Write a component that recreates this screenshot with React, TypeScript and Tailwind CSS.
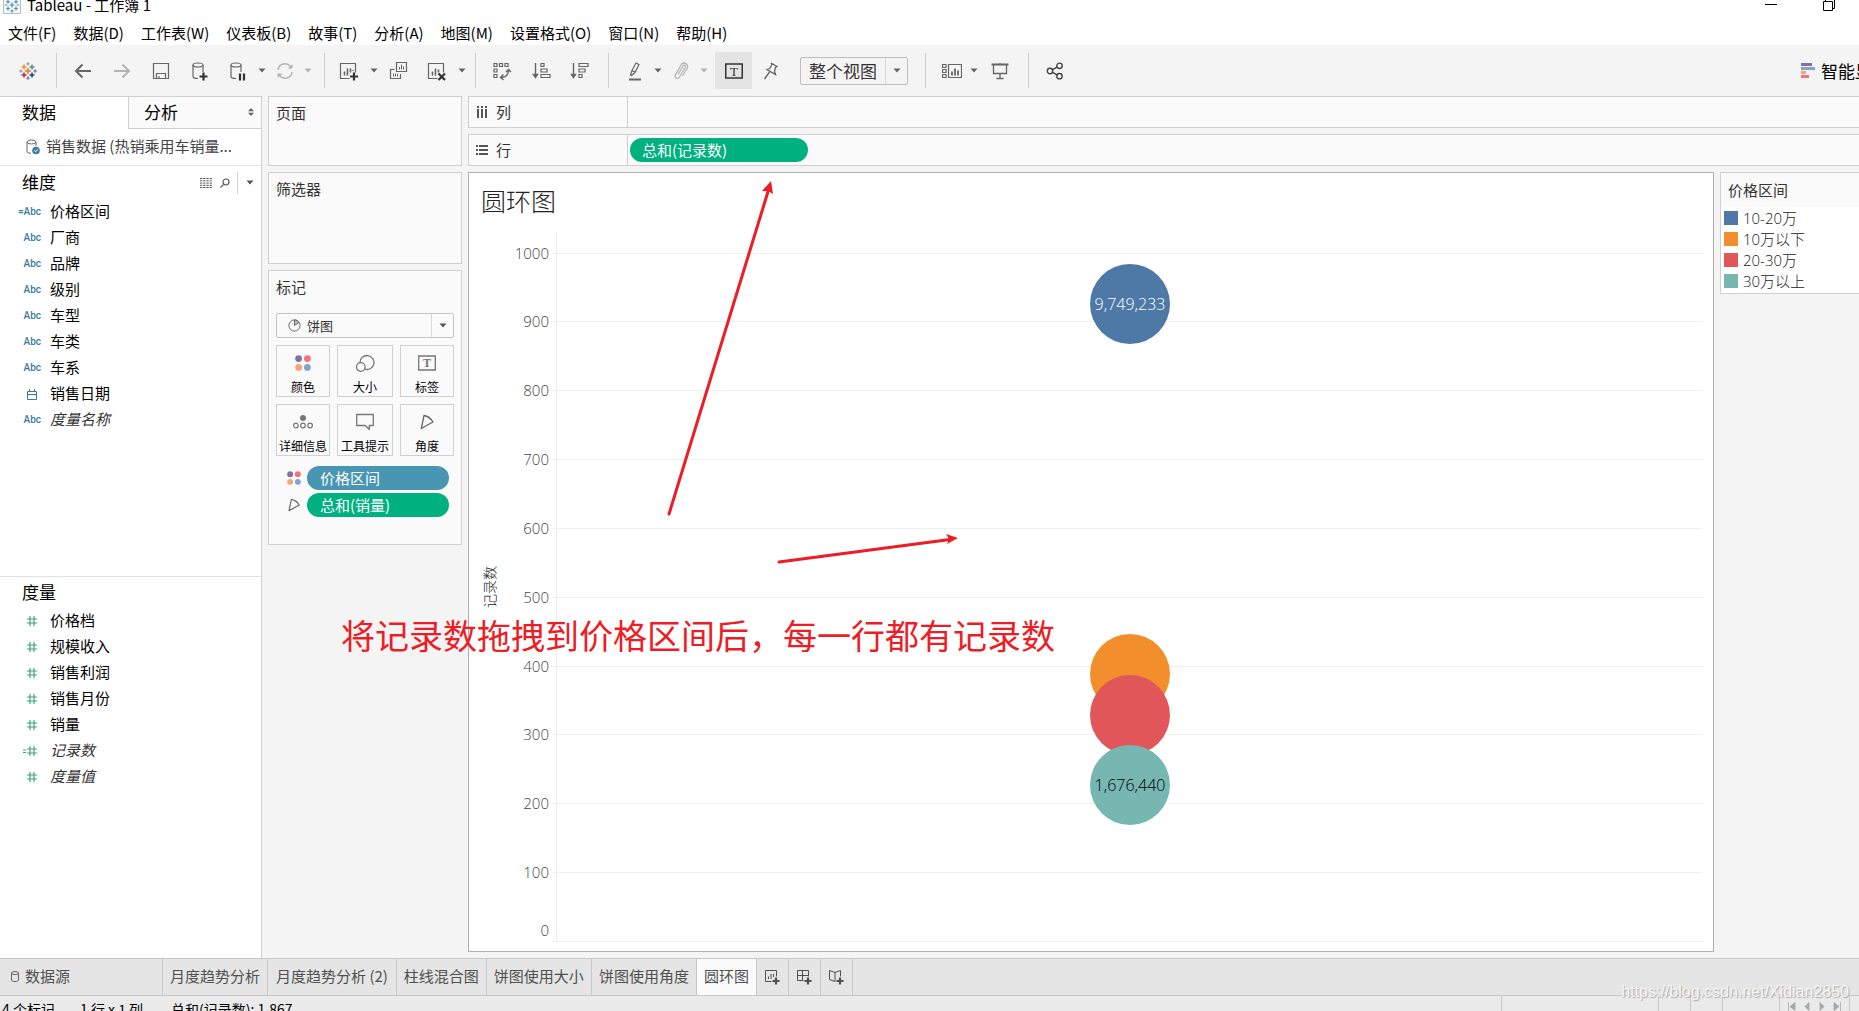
import React from "react";
import clsx from "clsx";

type IconProps = { children: React.ReactNode; size?: number; className?: string };

const Icon = ({ children, size = 20, className }: IconProps) => (
  <svg
    width={size}
    height={size}
    viewBox={`0 0 ${size} ${size}`}
    fill="none"
    stroke="currentColor"
    className={clsx("shrink-0", className)}
    aria-hidden="true"
  >
    {children}
  </svg>
);

const Caret = ({ className }: { className?: string }) => (
  <svg width="8" height="5" viewBox="0 0 8 5" className={clsx("shrink-0", className)} aria-hidden="true">
    <path d="M0.5 0.5h7L4 4.5z" fill="currentColor" />
  </svg>
);

const TableauLogo = () => (
  <Icon>
    <g strokeWidth="1.5">
      <path d="M10 7v6M7 10h6" stroke="#e8762c" />
      <path d="M6 3.5v5M3.5 6h5" stroke="#eb912c" />
      <path d="M14 3.5v5M11.5 6h5" stroke="#59879b" />
      <path d="M6 11.5v5M3.5 14h5" stroke="#c72035" />
      <path d="M14 11.5v5M11.5 14h5" stroke="#1f457e" />
    </g>
    <path d="M10 1.2v3.4M8.3 2.9h3.4" stroke="#7199a6" />
    <path d="M10 15.4v3.4M8.3 17.1h3.4" stroke="#5c6692" />
    <path d="M2.9 8.3v3.4M1.2 10h3.4" stroke="#7b94c4" />
    <path d="M17.1 8.3v3.4M15.4 10h3.4" stroke="#5c6692" />
  </Icon>
);

const TitleLogo = () => (
  <svg width="18" height="14" viewBox="0 0 18 14" fill="none" aria-hidden="true">
    <path d="M0.5 0V13.5H17.5V0" fill="#f4f6f7" stroke="#b9bec2" />
    <g stroke="#4f90b5" strokeWidth="1.2">
      <path d="M9 2.5v5M6.5 5h5M5 0v3.5M3.3 1.8h3.4M13 0v3.5M11.3 1.8h3.4M5 6.5v4M3.2 8.5h3.6M13 6.5v4M11.2 8.5h3.6M9 9.5v3M7.5 11h3M1.8 5h2.4M13.8 5h2.4" />
    </g>
  </svg>
);

const ColorDots = ({ size = 16 }: { size?: number }) => (
  <svg width={size} height={size} viewBox="0 0 16 16" className="shrink-0" aria-hidden="true">
    <circle cx="3.6" cy="3.6" r="3.4" fill="#85709c" />
    <circle cx="12.4" cy="3.6" r="3.4" fill="#fa6e7f" />
    <circle cx="3.6" cy="12.4" r="3.4" fill="#f4a678" />
    <circle cx="12.4" cy="12.4" r="3.4" fill="#81a4cd" />
  </svg>
);

const AngleIcon = ({ size = 16 }: { size?: number }) => (
  <svg width={size} height={size} viewBox="0 0 16 16" fill="none" stroke="#666" strokeWidth="1.3" className="shrink-0" aria-hidden="true">
    <path d="M5 1.5L2.3 14.5L14 8C11.5 4 8.5 2 5 1.5z" strokeLinejoin="round" />
  </svg>
);

const ToolButton = ({
  label,
  className,
  children,
}: {
  label: string;
  className?: string;
  children: React.ReactNode;
}) => (
  <button type="button" aria-label={label} className={clsx("flex h-[37px] shrink-0 items-center justify-center", className)}>
    {children}
  </button>
);

const Separator = ({ className }: { className?: string }) => (
  <div className={clsx("h-[35px] w-px shrink-0 bg-[#cfcfcf]", className)} />
);

const menus = ["文件(F)", "数据(D)", "工作表(W)", "仪表板(B)", "故事(T)", "分析(A)", "地图(M)", "设置格式(O)", "窗口(N)", "帮助(H)"];

const TitleBar = () => (
  <header className="flex h-[22px] shrink-0 items-start bg-white pl-[3px] text-[15px] leading-[10px] text-black">
    <TitleLogo />
    <span className="ml-1.5">Tableau - 工作簿 1</span>
    <div className="ml-auto flex items-start pr-6">
      <button type="button" aria-label="最小化" className="mr-[46px]">
        <svg width="12" height="6" viewBox="0 0 12 6">
          <path d="M0 4.5h12" stroke="#000" />
        </svg>
      </button>
      <button type="button" aria-label="还原">
        <svg width="12" height="11" viewBox="0 0 12 11" fill="none" stroke="#000">
          <path d="M0.5 1.5h9v9h-9zM2.5 1.5V0M11.5 0v8.5H9.5" />
        </svg>
      </button>
    </div>
  </header>
);

const MenuBar = () => (
  <nav className="flex h-[23px] shrink-0 items-center gap-[17px] bg-white pb-0.5 pl-2 text-[15px] leading-5 text-black">
    {menus.map((m) => (
      <button type="button" key={m} className="whitespace-nowrap">
        {m}
      </button>
    ))}
  </nav>
);

const Toolbar = () => (
  <div className="flex h-[51px] shrink-0 items-center overflow-hidden text-[#666]">
    <ToolButton label="开始页面" className="w-14">
      <TableauLogo />
    </ToolButton>
    <Separator />
    <ToolButton label="撤消" className="ml-[7px] w-[38px]">
      <Icon>
        <path d="M18 10H3M9.5 3.5L3 10l6.5 6.5" strokeWidth="2" />
      </Icon>
    </ToolButton>
    <ToolButton label="重做" className="w-10 text-[#b4b4b4]">
      <Icon>
        <path d="M2 10h15M10.5 3.5L17 10l-6.5 6.5" strokeWidth="2" />
      </Icon>
    </ToolButton>
    <ToolButton label="保存" className="w-[38px]">
      <Icon>
        <path d="M2.5 2.5h15v15h-15z" strokeWidth="1.2" />
        <path d="M5.5 17.5v-5h9v5M8 17.5v-2.5" strokeWidth="1.2" />
      </Icon>
    </ToolButton>
    <ToolButton label="新建数据源" className="w-10">
      <Icon>
        <ellipse cx="8" cy="4" rx="5" ry="2" strokeWidth="1.2" />
        <path d="M3 4v11.5c0 1 1.5 2 5 2M13 4v7" strokeWidth="1.2" />
        <path d="M13.5 11.5v8M9.5 15.5h8" stroke="#333" strokeWidth="2.2" />
      </Icon>
    </ToolButton>
    <ToolButton label="暂停自动更新" className="w-9">
      <Icon>
        <ellipse cx="8" cy="4" rx="5" ry="2" strokeWidth="1.2" />
        <path d="M3 4v11.5c0 1 1.5 2 5 2M13 4v7" strokeWidth="1.2" />
        <path d="M12 12.5v7M16 12.5v7" stroke="#333" strokeWidth="2.2" />
      </Icon>
    </ToolButton>
    <ToolButton label="暂停选项" className="w-3">
      <Caret />
    </ToolButton>
    <ToolButton label="运行更新" className="w-[34px] text-[#b4b4b4]">
      <Icon>
        <path d="M3 9a7 7 0 0 1 12.5-3.5M17 11a7 7 0 0 1-12.5 3.5" strokeWidth="1.5" />
        <path d="M12.5 7.5h5v-4.5zM7.5 12.5h-5v4.5z" fill="currentColor" stroke="none" />
      </Icon>
    </ToolButton>
    <ToolButton label="更新选项" className="w-3 text-[#b4b4b4]">
      <Caret />
    </ToolButton>
    <Separator className="ml-2.5" />
    <ToolButton label="新建工作表" className="ml-1 w-10">
      <Icon>
        <path d="M10.5 17.5h-9v-15h15v9" strokeWidth="1.2" />
        <path d="M5.5 14.5v-4M8.5 14.5v-7M11.5 11.5v-4M14 10v-1" strokeWidth="1.6" />
        <path d="M15 11.5v8M11 15.5h8" stroke="#333" strokeWidth="2.2" />
      </Icon>
    </ToolButton>
    <ToolButton label="新建选项" className="w-2.5">
      <Caret />
    </ToolButton>
    <ToolButton label="复制" className="w-[38px]">
      <Icon>
        <path d="M8.5 1.5h10v9h-10z" strokeWidth="1.2" />
        <path d="M11.5 8.5v-2.5M13.5 8.5v-5M15.5 8.5v-3" />
        <path d="M6.5 8.5h-4v9h10v-4.5" strokeWidth="1.2" />
        <path d="M5.5 15.5v-3M7.5 15.5v-3M9.5 15.5v-2.5" />
      </Icon>
    </ToolButton>
    <ToolButton label="清除工作表" className="w-10">
      <Icon>
        <path d="M10.5 17.5h-9v-15h15v9" strokeWidth="1.2" />
        <path d="M5.5 14.5v-4M8.5 14.5v-7M11.5 11.5v-3" strokeWidth="1.6" />
        <path d="M11.5 12.5l6.5 6.5M18 12.5l-6.5 6.5" stroke="#333" strokeWidth="2.2" />
      </Icon>
    </ToolButton>
    <ToolButton label="清除选项" className="w-2.5">
      <Caret />
    </ToolButton>
    <Separator className="ml-2" />
    <ToolButton label="交换行和列" className="ml-1.5 w-10">
      <Icon>
        <path d="M2 2.5h3v3h-3zM7.5 2.5h3v3h-3zM13 2.5h3v3h-3zM2 8h3v3h-3zM2 13.5h3v3h-3z" strokeWidth="1.2" />
        <path d="M16.5 9c0 5-2 7-7 7.5M14 11l2.5-2.5L19 11M11.5 13.5l-3 3 3 2.5" strokeWidth="1.4" />
      </Icon>
    </ToolButton>
    <ToolButton label="升序排序" className="w-10">
      <Icon>
        <path d="M3.5 2v14M1.5 13.5l2 3 2-3z" strokeWidth="1.4" />
        <path d="M9 2.5h3v3h-3zM9 8h6v3h-6zM9 13.5h9v3h-9z" strokeWidth="1.2" />
      </Icon>
    </ToolButton>
    <ToolButton label="降序排序" className="w-9">
      <Icon>
        <path d="M3.5 2v14M1.5 13.5l2 3 2-3z" strokeWidth="1.4" />
        <path d="M9 2.5h9v3h-9zM9 8h6v3h-6zM9 13.5h3v3h-3z" strokeWidth="1.2" />
      </Icon>
    </ToolButton>
    <Separator className="ml-2.5" />
    <ToolButton label="突出显示" className="ml-2 w-9">
      <Icon>
        <path d="M5.5 14l1.5-4.5 4-7.5 3 1.5-4 8-3.5 3zM7 9.5l3 1.5" strokeWidth="1.2" />
        <path d="M4 18.5h12" strokeWidth="2" />
      </Icon>
    </ToolButton>
    <ToolButton label="突出显示选项" className="w-2.5">
      <Caret />
    </ToolButton>
    <ToolButton label="组成员" className="w-9 text-[#b4b4b4]">
      <Icon>
        <path d="M7 13.5l5-8.5c1-1.6 3.2-.4 2.3 1.3L8.5 16c-1.7 2.7-5.5.8-4-2.2L10 4c2.4-4 8.5-1 6.2 3.4L11.5 15" strokeWidth="1.3" />
      </Icon>
    </ToolButton>
    <ToolButton label="组选项" className="w-2.5 text-[#b4b4b4]">
      <Caret />
    </ToolButton>
    <ToolButton label="显示标记标签" className="ml-1.5 w-[37px] bg-[#e4e4e4] text-[#333]">
      <Icon>
        <path d="M1.75 3h16.5v14h-16.5z" strokeWidth="1.5" />
        <text x="10" y="14.5" textAnchor="middle" fontSize="13" fontFamily="Liberation Serif, serif" fill="currentColor" stroke="none">
          T
        </text>
      </Icon>
    </ToolButton>
    <ToolButton label="固定轴" className="w-9">
      <Icon>
        <path d="M11 2l6 3.5-1.5 1-1 4 1 3-8.5-5 2.5-1 2.5-4zM9.500 11l-5 7" strokeWidth="1.3" />
      </Icon>
    </ToolButton>
    <div className="relative ml-3 flex h-7 w-[108px] shrink-0 items-center">
      <select
        aria-label="适合"
        className="h-7 w-full appearance-none rounded-xs border border-[#bfbfbf] bg-transparent pl-2 text-[17px] leading-6 text-[#333]"
      >
        <option>整个视图</option>
        <option>标准</option>
        <option>适合宽度</option>
      </select>
      <div className="pointer-events-none absolute inset-y-px right-px flex w-[22px] items-center justify-center border-l border-[#d9d9d9]">
        <Caret />
      </div>
    </div>
    <Separator className="ml-[17px]" />
    <ToolButton label="显示/隐藏卡" className="ml-2 w-9">
      <Icon>
        <path d="M0.6 3.5h3.4v3h-3.4zM0.6 8.5h3.4v3h-3.4zM0.6 13.5h3.4v3h-3.4zM6.5 3.5h13v13h-13z" strokeWidth="1.2" />
        <path d="M10 14.5v-4M13 14.5v-7M16 14.5v-5" strokeWidth="1.8" />
      </Icon>
    </ToolButton>
    <ToolButton label="卡选项" className="w-2">
      <Caret />
    </ToolButton>
    <ToolButton label="演示模式" className="ml-1 w-9">
      <Icon>
        <path d="M1.5 3.5h17" strokeWidth="2" />
        <path d="M3.5 3.5v9h13v-9M10 2v2M10 12.5v5M6.5 17.5h7" strokeWidth="1.3" />
      </Icon>
    </ToolButton>
    <Separator className="ml-2.5" />
    <ToolButton label="共享工作簿" className="ml-1.5 w-10 text-[#444]">
      <Icon>
        <circle cx="5" cy="10" r="2.7" strokeWidth="1.4" />
        <circle cx="14.5" cy="4.8" r="2.7" strokeWidth="1.4" />
        <circle cx="14.5" cy="15.2" r="2.7" strokeWidth="1.4" />
        <path d="M7.5 8.7l4.5-2.5M7.5 11.3l4.5 2.5" strokeWidth="1.4" />
      </Icon>
    </ToolButton>
    {/* runs past the window edge, so only the start of the label shows */}
    <button type="button" className="ml-auto flex w-[58px] shrink-0 items-center gap-1.5 text-[17px] leading-6 whitespace-nowrap text-black">
      <svg width="14" height="15" viewBox="0 0 14 15" className="shrink-0" aria-hidden="true">
        <path d="M0 0h11v3H0z" fill="#85709c" />
        <path d="M0 4h14v3H0z" fill="#81a4cd" />
        <path d="M0 8h5v3H0z" fill="#f4a678" />
        <path d="M0 12h8v3H0z" fill="#fa6e7f" />
      </svg>
      智能显示
    </button>
  </div>
);

type Field = { name: string; kind: "abc" | "date" | "number"; calc?: boolean; italic?: boolean };

const dimensions: Field[] = [
  { name: "价格区间", kind: "abc", calc: true },
  { name: "厂商", kind: "abc" },
  { name: "品牌", kind: "abc" },
  { name: "级别", kind: "abc" },
  { name: "车型", kind: "abc" },
  { name: "车类", kind: "abc" },
  { name: "车系", kind: "abc" },
  { name: "销售日期", kind: "date" },
  { name: "度量名称", kind: "abc", italic: true },
];

const measures: Field[] = [
  { name: "价格档", kind: "number" },
  { name: "规模收入", kind: "number" },
  { name: "销售利润", kind: "number" },
  { name: "销售月份", kind: "number" },
  { name: "销量", kind: "number" },
  { name: "记录数", kind: "number", calc: true, italic: true },
  { name: "度量值", kind: "number", italic: true },
];

const FieldRow = ({ field }: { field: Field }) => (
  <li className="flex h-[26px] items-center text-[15px] leading-5">
    <span className="flex w-[41px] shrink-0 items-center justify-end">
      {field.kind === "abc" && (
        <span className="font-['Roboto','Liberation_Sans',sans-serif] text-[10px] leading-4 font-medium text-[#3b7b9b]">
          {field.calc && "="}Abc
        </span>
      )}
      {field.kind === "date" && (
        <svg width="10" height="11" viewBox="0 0 10 11" fill="none" stroke="#3b7b9b" className="mr-1" aria-hidden="true">
          <path d="M0.5 2.5h9v8h-9zM0.5 5.5h9M2.5 0v2.5M7.5 0v2.5" />
        </svg>
      )}
      {field.kind === "number" && (
        <svg width="14" height="10" viewBox="0 0 14 10" fill="none" stroke="#3fa47a" strokeWidth="1.2" className="mr-1" aria-hidden="true">
          <path d="M7 0v10M11 0v10M4 3h10M4 7h10" />
          {field.calc && <path d="M0 4h3M0 6.5h3" strokeWidth="1" />}
        </svg>
      )}
    </span>
    <span className={clsx("ml-[9px] pb-0.5", field.italic ? "text-[#333] italic" : "text-black")}>{field.name}</span>
  </li>
);

const DataPane = () => (
  <aside className="flex w-[262px] shrink-0 flex-col border-t border-r border-[#d0d0d0] bg-white text-black">
    <div className="flex h-8 shrink-0 text-[17px] leading-6">
      <button type="button" className="w-32 pb-0.5 pl-[22px] text-left">
        数据
      </button>
      <button type="button" className="flex flex-1 items-center border-b border-l border-[#d0d0d0] bg-[#fafafa] pr-[7px] pb-0.5 pl-[15px] text-left">
        分析
        <svg width="6" height="8" viewBox="0 0 6 8" className="ml-auto" fill="#666" aria-hidden="true">
          <path d="M0 3.3L3 0l3 3.3zM0 4.7h6L3 8z" />
        </svg>
      </button>
    </div>
    <button type="button" className="flex h-[37px] shrink-0 items-center gap-1.5 border-b border-[#e3e3e3] pl-[26px] text-[15px] leading-5 text-[#444]">
      <svg width="14" height="16" viewBox="0 0 14 16" fill="none" stroke="#666" className="shrink-0" aria-hidden="true">
        <ellipse cx="5.5" cy="3" rx="4.5" ry="2" />
        <path d="M1 3v9.5c0 1 1.5 1.7 4 1.7M10 3v4" />
        <circle cx="10" cy="11.5" r="3.8" fill="#3c7f9f" stroke="none" />
        <path d="M8.2 11.5l1.4 1.4 2.3-2.6" stroke="#fff" />
      </svg>
      <span className="truncate pb-0.5">销售数据 (热销乘用车销量...</span>
    </button>

    <section className="flex flex-1 flex-col">
      <div className="flex h-[33px] items-center pr-[7px] pl-[22px]">
        <h2 className="pb-0.5 text-[17px] leading-6">维度</h2>
        <button type="button" aria-label="视图" className="ml-auto">
          <svg width="12" height="10" viewBox="0 0 12 10" stroke="#555" strokeDasharray="2.3 0.9" aria-hidden="true">
            <path d="M0 0.5h12M0 2.8h12M0 5.1h12M0 7.3h12M0 9.5h12" />
          </svg>
        </button>
        <button type="button" aria-label="搜索" className="ml-2">
          <svg width="10" height="10" viewBox="0 0 10 10" fill="none" stroke="#555" strokeWidth="1.2" aria-hidden="true">
            <circle cx="6" cy="4" r="3" />
            <path d="M3.6 6.4L0.5 9.5" />
          </svg>
        </button>
        <div className="ml-[7px] h-[22px] w-px bg-[#d0d0d0]" />
        <button type="button" aria-label="选项" className="ml-2 text-[#555]">
          <Caret />
        </button>
      </div>
      <ul>
        {dimensions.map((f) => (
          <FieldRow key={f.name} field={f} />
        ))}
      </ul>
    </section>

    <section className="h-[382px] shrink-0 border-t border-[#e0e0e0]">
      <h2 className="flex h-[31px] items-center pb-0.5 pl-[22px] text-[17px] leading-6">度量</h2>
      <ul>
        {measures.map((f) => (
          <FieldRow key={f.name} field={f} />
        ))}
      </ul>
    </section>
  </aside>
);

const Card = ({ title, className, children }: { title: string; className?: string; children?: React.ReactNode }) => (
  <section className={clsx("shrink-0 border border-[#d0d0d0] bg-[#fafafa] px-[7px] pt-1.5", className)}>
    <h3 className="text-[15px] leading-5 text-[#333]">{title}</h3>
    {children}
  </section>
);

const markButtons = [
  { label: "颜色", icon: <ColorDots /> },
  {
    label: "大小",
    icon: (
      <Icon>
        <path d="M5 9.5a7 7 0 1 1 5 6.700" strokeWidth="1.3" />
        <circle cx="5.8" cy="14" r="4.3" strokeWidth="1.3" />
      </Icon>
    ),
  },
  {
    label: "标签",
    icon: (
      <Icon>
        <path d="M1.7 3h16.6v14h-16.6z" strokeWidth="1.3" />
        <text x="10" y="14" textAnchor="middle" fontSize="12" fontWeight="700" fontFamily="Liberation Serif, serif" fill="currentColor" stroke="none">
          T
        </text>
      </Icon>
    ),
  },
  {
    label: "详细信息",
    icon: (
      <Icon>
        <circle cx="10" cy="6" r="3" fill="currentColor" stroke="none" />
        <circle cx="2.9" cy="13.5" r="2.3" strokeWidth="1.2" />
        <circle cx="10" cy="13.5" r="2.3" strokeWidth="1.2" />
        <circle cx="17.1" cy="13.5" r="2.3" strokeWidth="1.2" />
      </Icon>
    ),
  },
  {
    label: "工具提示",
    icon: (
      <Icon>
        <path d="M1.7 2.5h16.6v11h-4v4l-4-4h-8.6z" strokeWidth="1.3" strokeLinejoin="round" />
      </Icon>
    ),
  },
  { label: "角度", icon: <AngleIcon /> },
];

const Pill = ({ label, className }: { label: string; className?: string }) => (
  <button type="button" className={clsx("flex h-6 items-center rounded-full text-[15px] leading-5 text-white", className)}>
    {label}
  </button>
);

const CardsPane = () => (
  <div className="ml-1.5 flex w-[194px] shrink-0 flex-col gap-1.5">
    <Card title="页面" className="h-[70px]" />
    <Card title="筛选器" className="h-[92px]" />
    <Card title="标记" className="h-[275px]">
      <div className="relative mt-4">
        <select
          aria-label="标记类型"
          className="block h-[25px] w-full appearance-none rounded-xs border border-[#c4c4c4] bg-[#fafafa] pl-[30px] text-[13px] leading-5 text-[#333]"
        >
          <option>饼图</option>
          <option>自动</option>
          <option>圆</option>
        </select>
        <svg width="13" height="13" viewBox="0 0 13 13" fill="none" stroke="#666" className="pointer-events-none absolute top-1.5 left-3" aria-hidden="true">
          <circle cx="6.5" cy="6.5" r="5.6" />
          <path d="M6.5 1v5.5l4.5-3C10 2 8.5 1 6.5 1z" fill="#bbb" />
        </svg>
        <div className="pointer-events-none absolute inset-y-px right-px flex w-[22px] items-center justify-center border-l border-[#d9d9d9] text-[#555]">
          <Caret />
        </div>
      </div>
      <div className="mt-[7px] grid grid-cols-[54px_56px_54px] justify-between gap-y-[7px]">
        {markButtons.map((b) => (
          <button
            type="button"
            key={b.label}
            className="flex h-[52px] flex-col items-center justify-between border border-[#d0d0d0] pt-[7px] pb-px text-xs leading-4 whitespace-nowrap text-black"
          >
            <span className="flex h-5 items-center text-[#777]">{b.icon}</span>
            {b.label}
          </button>
        ))}
      </div>
      <div className="mt-2.5 flex flex-col gap-[3px] pr-[5px] pl-[11px]">
        <div className="flex items-center gap-1.5">
          <ColorDots size={14} />
          <Pill label="价格区间" className="flex-1 bg-[#4996b2] pl-[13px]" />
        </div>
        <div className="flex items-center gap-1.5">
          <AngleIcon size={14} />
          <Pill label="总和(销量)" className="flex-1 bg-[#00b180] pl-[13px]" />
        </div>
      </div>
    </Card>
  </div>
);

const Shelf = ({ label, icon, children }: { label: string; icon: React.ReactNode; children?: React.ReactNode }) => (
  <div className="flex h-8 shrink-0 border border-r-0 border-[#d0d0d0] bg-[#fafafa]">
    <div className="flex w-[159px] shrink-0 items-center border-r border-[#d0d0d0] pl-[7px] text-[15px] leading-5 text-[#333]">
      {icon}
      <span className="ml-2">{label}</span>
    </div>
    <div className="flex flex-1 items-center pl-0.5">{children}</div>
  </div>
);

const AXIS_MAX = 1030;
const ticks = [1000, 900, 800, 700, 600, 500, 400, 300, 200, 100];
const yPos = (v: number) => `${(1 - v / AXIS_MAX) * 100}%`;

const marks = [
  { name: "10-20万", records: 926, sales: "9,749,233", color: "bg-[#4e79a7] text-white" },
  { name: "10万以下", records: 388, sales: "", color: "bg-[#f28e2b]" },
  { name: "20-30万", records: 328, sales: "", color: "bg-[#e15759]" },
  { name: "30万以上", records: 227, sales: "1,676,440", color: "bg-[#76b7b2] text-black" },
];

const Chart = () => (
  <section className="flex min-w-0 flex-1 flex-col border border-[#b0b0b0] bg-white pt-3 pr-2.5 pb-2.5 pl-3 font-['Open_Sans','Noto_Sans_CJK_SC',sans-serif] font-light">
    <h1 className="text-[25px] leading-8 text-[#222]">圆环图</h1>
    <div className="mt-[15px] flex flex-1">
      <div className="flex w-[18px] items-center justify-center">
        <span className="rotate-180 text-sm leading-4 text-[#222] [text-orientation:sideways] [writing-mode:vertical-rl]">记录数</span>
      </div>
      <div className="relative w-[57px] text-[15px] leading-5 text-[#444]">
        {ticks.map((t) => (
          <span key={t} className="absolute right-[7px] -translate-y-1/2" style={{ top: yPos(t) }}>
            {t}
          </span>
        ))}
        <span className="absolute right-[7px] bottom-px">0</span>
      </div>
      <div className="relative flex-1 border-l border-[#ececec]">
        {[...ticks, 0].map((t) => (
          <div key={t} className="absolute right-0 -left-1.5 h-px bg-[#f0f0f0]" style={{ top: yPos(t) }} />
        ))}
        {marks.map((m) => (
          <div
            key={m.name}
            className={clsx(
              "absolute left-1/2 flex size-20 -translate-x-1/2 -translate-y-1/2 items-center justify-center rounded-full text-base leading-5",
              m.color
            )}
            style={{ top: yPos(m.records) }}
          >
            {m.sales}
          </div>
        ))}
      </div>
    </div>
  </section>
);

const legend = [
  { name: "10-20万", color: "bg-[#4e79a7]" },
  { name: "10万以下", color: "bg-[#f28e2b]" },
  { name: "20-30万", color: "bg-[#e15759]" },
  { name: "30万以上", color: "bg-[#76b7b2]" },
];

const Legend = () => (
  <aside className="w-[139px] shrink-0 self-start border border-r-0 border-[#d0d0d0] bg-white">
    <h3 className="flex h-[34px] items-center bg-[#fafafa] pl-[7px] text-[15px] leading-5 text-[#333]">价格区间</h3>
    <ul className="pb-0.5 font-['Open_Sans','Noto_Sans_CJK_SC',sans-serif] text-[15px] leading-5 font-light text-[#222]">
      {legend.map((l) => (
        <li key={l.name} className="flex h-[21px] items-center gap-[5px] pl-[3px]">
          <span className={clsx("size-3.5", l.color)} />
          {l.name}
        </li>
      ))}
    </ul>
  </aside>
);

// hand-drawn notes on top of the workbook
const Annotations = () => (
  <div className="pointer-events-none absolute inset-0 text-[#ee1c25]">
    <svg className="absolute inset-0 size-full" fill="none" stroke="currentColor" strokeWidth="3" strokeLinecap="round" aria-hidden="true">
      <path d="M669 514L768.5 190" />
      <path d="M771 181L773 194L768 191L762 191z" fill="currentColor" stroke="none" />
      <path d="M779 562L950 539.5" />
      <path d="M958 538L947 544L949 539L946 534z" fill="currentColor" stroke="none" />
    </svg>
    <p className="absolute top-[611px] left-[341px] text-[34px] leading-[48px] whitespace-nowrap">
      将记录数拖拽到价格区间后，每一行都有记录数
    </p>
  </div>
);

const sheets = [
  { name: "月度趋势分析", className: "px-[7px]" },
  { name: "月度趋势分析 (2)", className: "px-2" },
  { name: "柱线混合图", className: "px-[7px]" },
  { name: "饼图使用大小", className: "px-[7px]" },
  { name: "饼图使用角度", className: "px-[7px]" },
  { name: "圆环图", className: "bg-[#fafafa] px-[7px]" },
];

const SheetTabs = () => (
  <nav className="flex h-[38px] shrink-0 border-y border-[#c8c8c8] bg-[#e5e5e5] text-[15px] leading-5 text-[#505050]">
    <button type="button" className="flex w-[163px] shrink-0 items-center gap-1.5 border-r border-[#c8c8c8] pb-0.5 pl-[11px]">
      <svg width="8" height="11" viewBox="0 0 8 11" fill="none" stroke="#666" aria-hidden="true">
        <ellipse cx="4" cy="2" rx="3.5" ry="1.5" />
        <path d="M0.5 2v7c0 2 7 2 7 0V2" />
      </svg>
      数据源
    </button>
    {sheets.map((s) => (
      <button
        type="button"
        key={s.name}
        className={clsx("shrink-0 border-r border-[#c8c8c8] pb-0.5 whitespace-nowrap", s.className)}
      >
        {s.name}
      </button>
    ))}
    <button type="button" aria-label="新建工作表" className="flex w-8 items-center justify-center border-r border-[#c8c8c8]">
      <Icon size={16}>
        <path d="M7.5 12.5h-6v-11h11v6M4.5 10v-2.5M7 10v-5M9.5 8v-3" />
        <path d="M12 8.5v7M8.5 12h7" strokeWidth="2.2" />
      </Icon>
    </button>
    <button type="button" aria-label="新建仪表板" className="flex w-8 items-center justify-center border-r border-[#c8c8c8]">
      <Icon size={16}>
        <path d="M7.5 11.5h-6v-10h11v6M6.5 1.5v10M1.5 6.5h11" />
        <path d="M12 8.5v7M8.5 12h7" strokeWidth="2.2" />
      </Icon>
    </button>
    <button type="button" aria-label="新建故事" className="flex w-8 items-center justify-center border-r border-[#c8c8c8]">
      <Icon size={16}>
        <path d="M7 3.5L1.5 1.5v9l5.5 2V3.5l5.5-2v6" />
        <path d="M12 8.5v7M8.5 12h7" strokeWidth="2.2" />
      </Icon>
    </button>
  </nav>
);

const navArrows = [
  { label: "第一张", d: "M0.5 0v9M7 0.5v8L2 4.5z" },
  { label: "上一张", d: "M6 0.5v8L2 4.5z" },
  { label: "下一张", d: "M2 0.5v8L6 4.5z" },
  { label: "最后一张", d: "M7.5 0v9M1 0.5v8L6 4.5z" },
];

const StatusBar = () => (
  <footer className="flex h-[15px] shrink-0 overflow-hidden bg-[#eaeaea] text-sm leading-[26px] whitespace-nowrap text-black">
    <span className="w-20 shrink-0 pl-0.5">4 个标记</span>
    <span className="w-[91px] shrink-0">1 行 x 1 列</span>
    <span>总和(记录数): 1,867</span>
    <div className="ml-auto flex shrink-0">
      <div className="w-[157px] border-l border-[#c8c8c8]" />
      <div className="w-8 border-l border-[#c8c8c8]" />
      <div className="w-8 border-l border-[#c8c8c8]" />
      <div className="w-[57px] border-l border-[#c8c8c8]" />
      <div className="flex w-[71px] items-end justify-between border-x border-[#c8c8c8] px-2">
        {navArrows.map((a) => (
          <button type="button" key={a.label} aria-label={a.label}>
            <svg width="8" height="9" viewBox="0 0 8 9" fill="#a8a8a8" stroke="#a8a8a8" className="block">
              <path d={a.d} strokeWidth="0.8" />
            </svg>
          </button>
        ))}
      </div>
      <div className="w-[9px]" />
    </div>
  </footer>
);

export default function App() {
  return (
    <div className="relative flex h-screen flex-col overflow-hidden bg-[#f4f4f4] font-['Noto_Sans_CJK_SC',sans-serif]">
      <TitleBar />
      <MenuBar />
      <Toolbar />
      <div className="flex min-h-0 flex-1">
        <DataPane />
        <CardsPane />
        <main className="ml-1.5 flex min-w-0 flex-1 flex-col gap-1.5">
          <Shelf
            label="列"
            icon={
              <svg width="12" height="12" viewBox="0 0 12 12" stroke="#555" strokeWidth="2" aria-hidden="true">
                <path d="M2 0v2M6 0v2M10 0v2M2 3v9M6 3v9M10 3v9" />
              </svg>
            }
          />
          <Shelf
            label="行"
            icon={
              <svg width="12" height="12" viewBox="0 0 12 12" stroke="#555" strokeWidth="2" aria-hidden="true">
                <path d="M0 2h2M0 6h2M0 10h2M3 2h9M3 6h9M3 10h9" />
              </svg>
            }
          >
            <Pill label="总和(记录数)" className="w-[178px] bg-[#00b180] pl-3" />
          </Shelf>
          <div className="mb-1.5 flex min-h-0 flex-1 gap-1.5">
            <Chart />
            <Legend />
          </div>
        </main>
      </div>
      <SheetTabs />
      <StatusBar />
      <Annotations />
      <div className="pointer-events-none absolute right-2.5 bottom-[7px] font-['Liberation_Sans',sans-serif] text-base leading-6 text-[#f6f6f6] [text-shadow:1px_1px_1px_#aaa]">
        https://blog.csdn.net/Xidian2850
      </div>
    </div>
  );
}
